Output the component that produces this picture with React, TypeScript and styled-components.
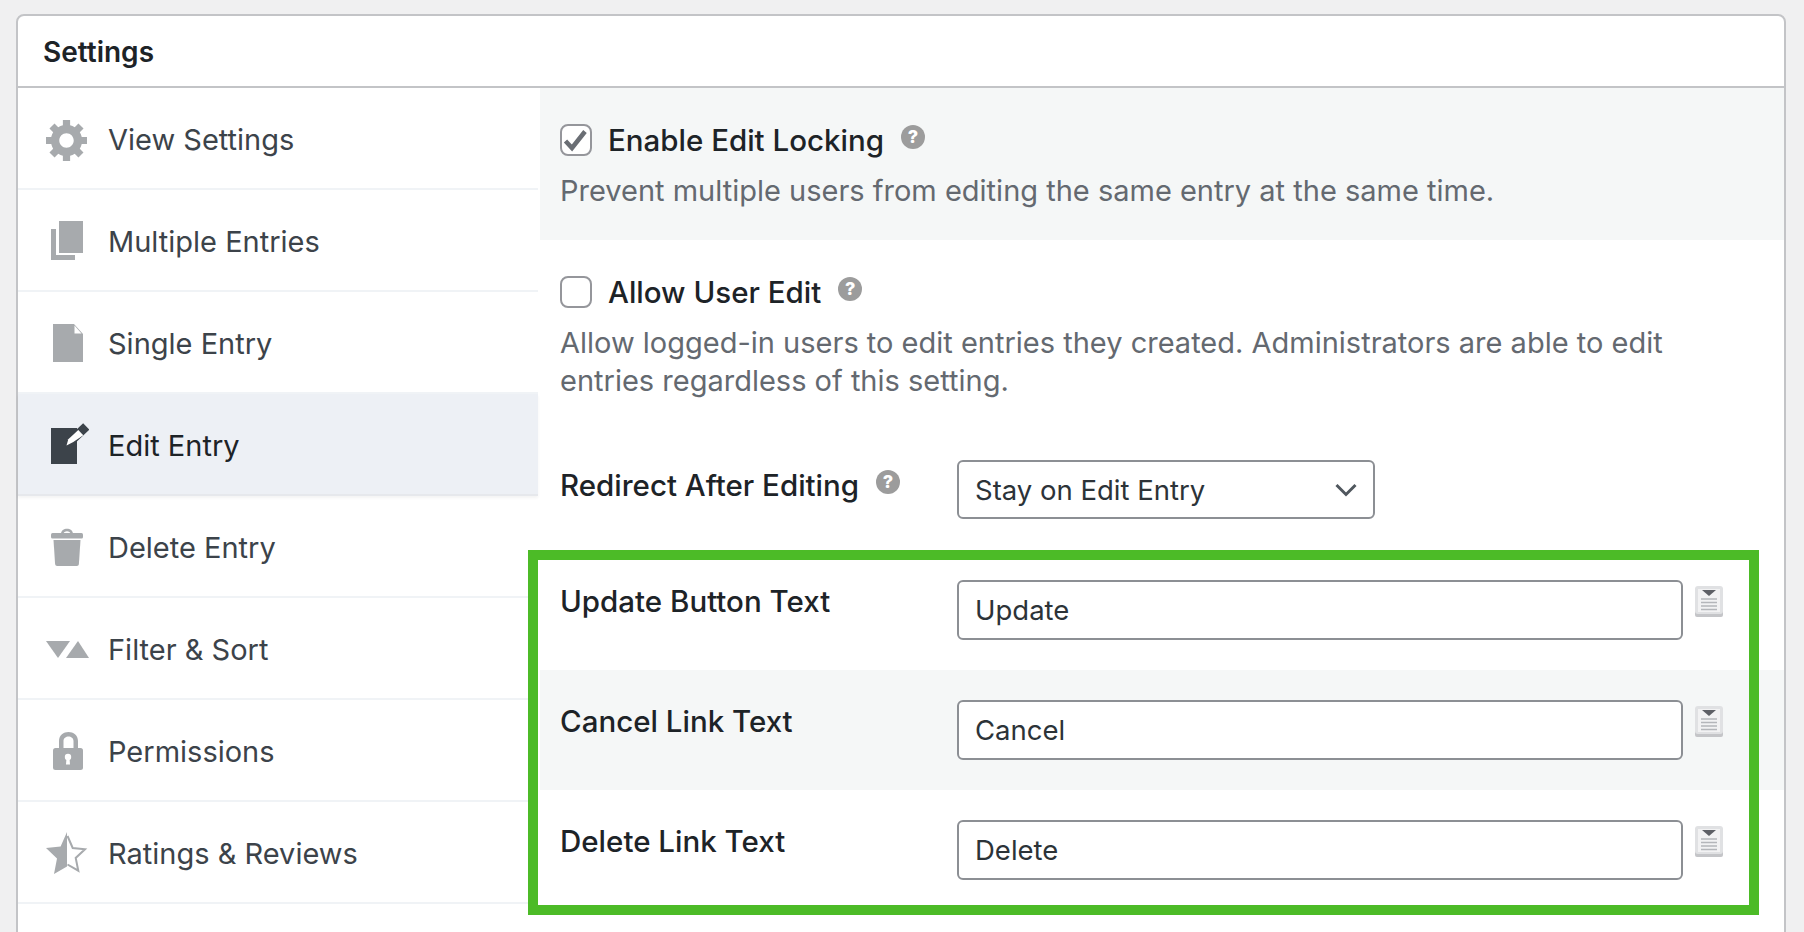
import React from "react";
import styled, { createGlobalStyle } from "styled-components";

const GlobalStyles = createGlobalStyle`
  html, body, #root {
    margin: 0;
    padding: 0;
    height: 100%;
    overflow: hidden;
  }
  body {
    background: #f0f0f1;
    font-family: Inter, "Noto Sans", "Liberation Sans", sans-serif;
    font-size: 29px;
    color: #1d2327;
    -webkit-font-smoothing: antialiased;
  }
`;

const ICON = "#a7aaad";
const DARK = "#3c434a";

const GearIcon = () => (
  <svg viewBox="0 0 44 44" width="44" height="44" fill={ICON}>
    <path
      transform="translate(-1.4,-1.8) scale(2.41)"
      d="M18 12h-2.18c-.17.7-.44 1.35-.81 1.93l1.54 1.54-2.1 2.1-1.54-1.54c-.58.36-1.23.63-1.91.79V19H8v-2.18c-.68-.16-1.33-.43-1.91-.79l-1.54 1.54-2.12-2.12 1.54-1.54c-.36-.58-.63-1.23-.79-1.91H1V9.03h2.17c.16-.7.44-1.35.8-1.94L2.43 5.55l2.1-2.1 1.54 1.54c.58-.37 1.24-.64 1.93-.81V2h3v2.18c.68.16 1.33.43 1.91.79l1.54-1.54 2.12 2.12-1.54 1.54c.36.59.64 1.24.8 1.94H18V12zm-8.5 1.5c1.66 0 3-1.34 3-3s-1.34-3-3-3-3 1.34-3 3 1.34 3 3 3z"
    />
  </svg>
);

const PagesIcon = () => (
  <svg viewBox="0 0 44 44" width="44" height="44" fill={ICON}>
    <path d="M14 2h24v32H14z" />
    <path d="M6 10h5v26h19v5H6z" />
  </svg>
);

const PageIcon = () => (
  <svg viewBox="0 0 44 44" width="44" height="44" fill={ICON}>
    <path d="M8 3h21l9 10v28H8z" />
    <path d="M29.5 4.5v8h7z" fill="#fff" />
  </svg>
);

const EditIcon = () => (
  <svg viewBox="0 0 44 44" width="44" height="44" fill="none">
    <path d="M6 5h26v36H6z" fill={DARK} />
    <path d="M27 17L38 6.500" stroke={DARK} strokeWidth="9" strokeLinecap="square" strokeLinejoin="round" />
    <path d="M21.500 22.500L23.300 16.300L33.300 7L38.300 12.300L28.300 19z" fill="#fff" />
  </svg>
);

const TrashIcon = () => (
  <svg viewBox="0 0 44 44" width="44" height="44" fill={ICON}>
    <path d="M16 9c0-7 12-7 12 0h-2.5c0-3.6-7-3.6-7 0z" />
    <rect x="6" y="8" width="32" height="5.5" rx="1.5" />
    <path d="M8.5 15h27l-1.6 24c-.1 1.3-1 2-2 2H12.1c-1 0-1.900-.7-2-2z" />
  </svg>
);

const SortIcon = () => (
  <svg viewBox="0 0 44 44" width="44" height="44" fill={ICON}>
    <path d="M1 14h24L13 31z" />
    <path d="M33 14l11 17H21z" />
  </svg>
);

const LockIcon = () => (
  <svg viewBox="0 0 44 44" width="44" height="44" fill={ICON}>
    <path d="M14 20v-8c0-12 19-12 19 0v8h-4.500v-8c0-6-10-6-10 0v8z" />
    <rect x="8" y="19" width="30" height="22" rx="2.500" />
    <circle cx="23" cy="28" r="3.200" fill="#fff" />
    <path d="M21.500 29h3l.5 6.500h-4z" fill="#fff" />
  </svg>
);

const StarIcon = () => (
  <svg viewBox="0 0 44 44" width="44" height="44" fill={ICON}>
    <path d="M22 1l-6.400 14.500L1 17l11 10.500L9 43l13-7.500z" />
    <path
      d="M22.500 5l5.200 12 12.300 1.300-9.300 8.600 2.600 12.800-10.800-6.200"
      fill="none"
      stroke={ICON}
      strokeWidth="2"
    />
  </svg>
);

const CheckMark = () => (
  <svg viewBox="0 0 28 28" width="28" height="28" fill="none">
    <path d="M3.500 15l6.500 7L23 5.500" stroke="#6a6e74" strokeWidth="4.500" />
  </svg>
);

const Chevron = () => (
  <svg viewBox="0 0 22 14" width="22" height="14" fill="none">
    <path d="M1.500 2l9.500 9.500L20.500 2" stroke="#50575e" strokeWidth="3" />
  </svg>
);

const MergeTagIcon = () => (
  <svg viewBox="0 0 28 31" width="28" height="31">
    <rect x="0" y="3" width="28" height="28" rx="2" fill="#c4c5c8" />
    <rect x="0" y="0" width="28" height="28" rx="3" fill="#e0e1e3" />
    <rect x="3" y="3" width="22" height="23" fill="#f2f2f3" />
    <path d="M7 4h14l-7 6z" fill="#5e6066" />
    <path d="M6 13h16M6 16.500h16M6 20h16M6 23.500h16" stroke="#b4b6ba" strokeWidth="1.500" />
  </svg>
);

const navItems = [
  { label: "View Settings", icon: <GearIcon /> },
  { label: "Multiple Entries", icon: <PagesIcon /> },
  { label: "Single Entry", icon: <PageIcon /> },
  { label: "Edit Entry", icon: <EditIcon />, active: true },
  { label: "Delete Entry", icon: <TrashIcon /> },
  { label: "Filter & Sort", icon: <SortIcon /> },
  { label: "Permissions", icon: <LockIcon /> },
  { label: "Ratings & Reviews", icon: <StarIcon /> },
];

const textFields = [
  { label: "Update Button Text", value: "Update" },
  { label: "Cancel Link Text", value: "Cancel", shaded: true },
  { label: "Delete Link Text", value: "Delete" },
];

export default function App() {
  return (
    <>
      <GlobalStyles />
      <Page>
        <Card>
          <CardHeader>Settings</CardHeader>
          <CardBody>
            <Sidebar>
              {navItems.map((item) => (
                <NavItem key={item.label} $active={item.active}>
                  <NavIcon>{item.icon}</NavIcon>
                  {item.label}
                </NavItem>
              ))}
            </Sidebar>
            <Content>
              <CheckRow $shaded>
                <CheckHead>
                  <Checkbox>
                    <CheckMark />
                  </Checkbox>
                  <FieldLabel>Enable Edit Locking</FieldLabel>
                  <Help>?</Help>
                </CheckHead>
                <Description>
                  Prevent multiple users from editing the same entry at the same time.
                </Description>
              </CheckRow>
              <CheckRow>
                <CheckHead>
                  <Checkbox />
                  <FieldLabel>Allow User Edit</FieldLabel>
                  <Help>?</Help>
                </CheckHead>
                <Description>
                  Allow logged-in users to edit entries they created. Administrators are able to
                  edit entries regardless of this setting.
                </Description>
              </CheckRow>
              <FieldRow>
                <FieldName $height={50}>
                  <FieldLabel>Redirect After Editing</FieldLabel>
                  <Help>?</Help>
                </FieldName>
                <SelectBox>
                  Stay on Edit Entry
                  <Chevron />
                </SelectBox>
              </FieldRow>
              <Highlighted>
                {textFields.map((field) => (
                  <FieldRow key={field.label} $shaded={field.shaded}>
                    <FieldName $height={42}>
                      <FieldLabel>{field.label}</FieldLabel>
                    </FieldName>
                    <TextInput readOnly value={field.value} />
                    <MergeTag>
                      <MergeTagIcon />
                    </MergeTag>
                  </FieldRow>
                ))}
              </Highlighted>
            </Content>
          </CardBody>
        </Card>
      </Page>
    </>
  );
}

const Page = styled.div`
  height: 100%;
  box-sizing: border-box;
  padding: 14px 18px 0 16px;
`;

const Card = styled.div`
  height: 1000px;
  box-sizing: border-box;
  background: #fff;
  border: 2px solid #c3c4c7;
  border-radius: 8px 8px 0 0;
`;

const CardHeader = styled.div`
  height: 72px;
  box-sizing: border-box;
  padding: 2px 25px 0;
  display: flex;
  align-items: center;
  font-size: 28px;
  font-weight: 600;
  border-bottom: 2px solid #c3c4c7;
`;

const CardBody = styled.div`
  display: flex;
`;

const Sidebar = styled.div`
  width: 520px;
  margin-right: 2px;
  flex: none;
`;

const NavItem = styled.div<{ $active?: boolean }>`
  height: 102px;
  box-sizing: border-box;
  display: flex;
  align-items: center;
  padding-left: 27px;
  padding-top: 2px;
  color: ${(p) => (p.$active ? "#1d2327" : "#3c434a")};
  background: ${(p) => (p.$active ? "#edf0f5" : "transparent")};
  border-bottom: 2px solid ${(p) => (p.$active ? "#e6e8ec" : "#f0f3f6")};
  box-shadow: ${(p) => (p.$active ? "0 2px 3px rgba(0, 0, 0, 0.05)" : "none")};
`;

const NavIcon = styled.span`
  width: 44px;
  height: 44px;
  margin-right: 19px;
  flex: none;
  display: flex;
`;

const Content = styled.div`
  flex: 1;
  min-width: 0;
`;

const CheckRow = styled.div<{ $shaded?: boolean }>`
  padding: 36px 20px 30px;
  background: ${(p) => (p.$shaded ? "#f5f7f7" : "transparent")};
`;

const CheckHead = styled.div`
  display: flex;
  align-items: center;
  height: 32px;
`;

const Checkbox = styled.span`
  width: 32px;
  height: 32px;
  box-sizing: border-box;
  margin-right: 16px;
  flex: none;
  display: flex;
  align-items: center;
  justify-content: center;
  background: #fff;
  border: 2px solid #95969b;
  border-radius: 8px;
`;

const FieldLabel = styled.span`
  font-size: 29.5px;
  font-weight: 500;
  white-space: nowrap;
  color: #1d2327;
`;

const Help = styled.span`
  width: 24px;
  height: 24px;
  margin-left: 17px;
  margin-top: -6px;
  flex: none;
  display: flex;
  align-items: center;
  justify-content: center;
  border-radius: 50%;
  background: #9c9c9c;
  color: #fff;
  font-size: 18px;
  font-weight: 800;
  line-height: 1;
`;

const Description = styled.p`
  margin: 16px 0 0;
  max-width: 1150px;
  line-height: 38px;
  color: #646970;
`;

const FieldRow = styled.div<{ $shaded?: boolean }>`
  height: 120px;
  box-sizing: border-box;
  padding: 30px 0 0 20px;
  display: flex;
  align-items: flex-start;
  background: ${(p) => (p.$shaded ? "#f5f7f7" : "transparent")};
`;

const FieldName = styled.div<{ $height: number }>`
  width: 397px;
  height: ${(p) => p.$height}px;
  flex: none;
  display: flex;
  align-items: center;
`;

const SelectBox = styled.div`
  width: 418px;
  height: 59px;
  box-sizing: border-box;
  padding: 0 16px;
  display: flex;
  align-items: center;
  justify-content: space-between;
  font-size: 27.5px;
  background: #fff;
  border: 2px solid #8c8f94;
  border-radius: 6px;
  color: #2c3338;
`;

const TextInput = styled.input`
  width: 726px;
  height: 60px;
  box-sizing: border-box;
  padding: 0 16px;
  flex: none;
  font: inherit;
  font-size: 27.5px;
  color: #2c3338;
  background: #fff;
  border: 2px solid #8c8f94;
  border-radius: 6px;
  outline: none;
`;

const MergeTag = styled.span`
  margin: 6px 0 0 12px;
  display: flex;
`;

const Highlighted = styled.div`
  position: relative;

  &::after {
    content: "";
    position: absolute;
    top: 0;
    left: -12px;
    right: 25px;
    bottom: -5px;
    border: 10px solid #4cbb27;
    pointer-events: none;
  }
`;
